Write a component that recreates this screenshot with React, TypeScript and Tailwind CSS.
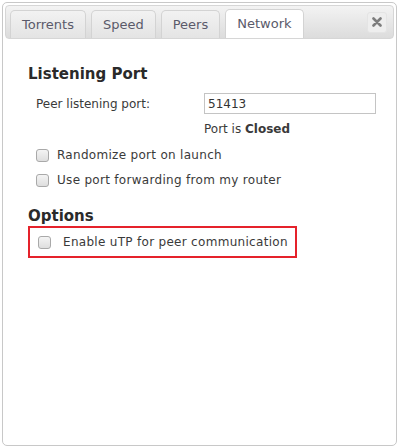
import React from 'react';

const tabs = ['Torrents', 'Speed', 'Peers', 'Network'];

const Check: React.FC = () => (
  <span className="inline-block w-[13px] h-[13px] rounded-[3px] border border-[#a9a9a9] bg-gradient-to-b from-[#f4f4f4] to-[#dedede] shrink-0" />
);

const App: React.FC = () => {
  return (
    <div className="w-[400px] h-[448px] bg-white p-[2px] font-['DejaVu_Sans',Verdana,sans-serif]">
      <div className="h-[444px] w-[395px] border border-[#c8c8c8] rounded-[5px] p-[2px] bg-white">
        {/* tab bar */}
        <div className="h-[34px] flex items-end pl-[4px] pr-[6px] rounded-[4px] border border-[#d6d6d6] bg-gradient-to-b from-[#f3f3f3] to-[#dcdcdc]">
          {tabs.map((t) => {
            const active = t === 'Network';
            return (
              <div
                key={t}
                className={
                  active
                    ? 'mr-[5px] h-[29px] px-[11px] flex items-center rounded-t-[5px] border border-b-0 border-[#d3d3d3] bg-white text-[13px] text-[#5a5a6a]'
                    : 'mr-[5px] h-[28px] px-[11px] flex items-center rounded-t-[5px] border border-b-0 border-[#d3d3d3] bg-gradient-to-b from-[#f2f2f2] to-[#e4e4e4] text-[13px] text-[#5a5a6a]'
                }
              >
                {t}
              </div>
            );
          })}
          <div className="ml-auto self-center w-[20px] h-[21px] rounded-[3px] border border-[#e4e4e4] bg-[#eeeeee] flex items-center justify-center">
            <svg width="10" height="10" viewBox="0 0 10 10">
              <path d="M1.5 1.5 L8.5 8.5 M8.5 1.5 L1.5 8.5" stroke="#7d7d7d" strokeWidth="2.6" strokeLinecap="round" />
            </svg>
          </div>
        </div>

        {/* body */}
        <div className="pl-[23px] pt-[26px] text-[12px] tracking-[0.3px] text-[#3a3a3a]">
          <div className="text-[15px] font-bold tracking-normal text-[#2a2a2a] leading-[18px]">Listening Port</div>
          <div className="flex items-center mt-[10px] pl-[8px]">
            <span className="w-[168px] tracking-normal">Peer listening port:</span>
            <div className="w-[172px] h-[21px] border border-[#c4c4c4] px-[3px] flex items-center text-[12px] tracking-normal text-[#333]">51413</div>
          </div>
          <div className="pl-[176px] mt-[7px] leading-[16px] tracking-normal">
            Port is <b>Closed</b>
          </div>
          <div className="flex items-center gap-[8px] pl-[8px] mt-[10px] leading-[16px]">
            <Check />
            <span>Randomize port on launch</span>
          </div>
          <div className="flex items-center gap-[8px] pl-[8px] mt-[9px] leading-[16px]">
            <Check />
            <span>Use port forwarding from my router</span>
          </div>
          <div className="text-[15px] font-bold tracking-normal text-[#2a2a2a] leading-[18px] mt-[19px]">Options</div>
          <div className="mt-[1px] w-[269px] h-[32px] border-2 border-[#e5222b] flex items-center gap-[12px] pl-[8px]">
            <Check />
            <span>Enable uTP for peer communication</span>
          </div>
        </div>
      </div>
    </div>
  );
};

export default App;
